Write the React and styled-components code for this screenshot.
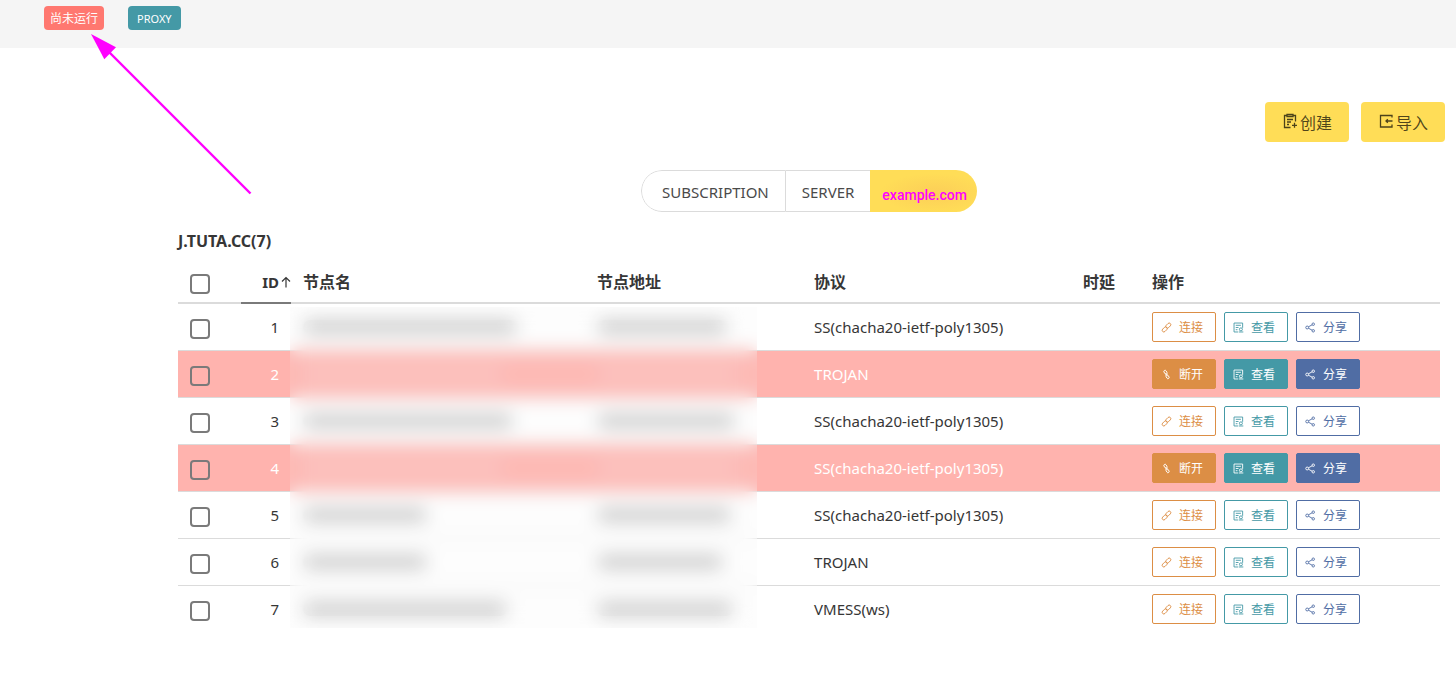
import React from "react";
import styled, { createGlobalStyle } from "styled-components";

const colors = {
  text: "#363636",
  line: "#dbdbdb",
  yellow: "#ffdd57",
  red: "#ff7870",
  selected: "#ffb3ae",
  orange: "#dc8e45",
  teal: "#4499a6",
  blue: "#506da4",
  mark: "#ff00ff",
};

const GlobalStyle = createGlobalStyle`
  * { box-sizing: border-box; }
  body {
    margin: 0;
    background: #fff;
    color: ${colors.text};
    font-family: "Noto Sans", "Noto Sans CJK SC", sans-serif;
    font-size: 15px;
    line-height: 24px;
  }
  button, input { font: inherit; margin: 0; }
`;

const Page = styled.div`
  position: relative;
`;

const TopBar = styled.header`
  display: flex;
  align-items: flex-start;
  gap: 24px;
  height: 48px;
  padding: 6px 44px;
  background: #f5f5f5;
`;

const StatusTag = styled.button`
  height: 24px;
  padding: 2px ${(p) => p.$pad}px 0;
  border: 0;
  border-radius: 4px;
  background: ${(p) => p.$color};
  color: #fff;
  font-size: ${(p) => p.$size}px;
  line-height: 22px;
  cursor: pointer;
`;

const Toolbar = styled.div`
  display: flex;
  justify-content: flex-end;
  gap: 12px;
  padding: 54px 11px 0;
`;

const ToolButton = styled.button`
  display: flex;
  align-items: center;
  justify-content: center;
  gap: 2px;
  width: 84px;
  height: 40px;
  padding: 2px 0 0;
  border: 0;
  border-radius: 4px;
  background: ${colors.yellow};
  color: rgba(0, 0, 0, 0.7);
  font-size: 16px;
  cursor: pointer;
  svg { margin-bottom: 4px; }
`;

const Main = styled.main`
  padding: 28px 16px 44px 178px;
`;

const Tabs = styled.nav`
  display: flex;
  width: fit-content;
  height: 42px;
  margin: 0 auto;
  border-radius: 21px;
  overflow: hidden;
`;

const Tab = styled.a`
  display: flex;
  align-items: center;
  padding: 2px 16px 0 ${(p) => (p.$first ? 20 : 16)}px;
  border: 1px solid ${colors.line};
  border-right-width: ${(p) => (p.$first ? 1 : 0)}px;
  border-left-width: ${(p) => (p.$first ? 1 : 0)}px;
  border-radius: ${(p) => (p.$first ? "21px 0 0 21px" : "0")};
  color: #4a4a4a;
  text-decoration: none;
`;

const ActiveTab = styled.a`
  display: flex;
  align-items: center;
  padding: 8px 10px 0 12px;
  background: radial-gradient(ellipse at 60% 55%, #fcce58 0, ${colors.yellow} 60%);
  color: ${colors.mark};
  font-family: Roboto, sans-serif;
  font-size: 14px;
  font-weight: 500;
  text-decoration: none;
`;

const Title = styled.h1`
  margin: 17px 0 9px;
  font-size: 16px;
  line-height: 24px;
  font-weight: 700;
`;

const TableWrap = styled.div`
  position: relative;
`;

const Table = styled.table`
  width: 100%;
  border-collapse: separate;
  border-spacing: 0;
  table-layout: fixed;
`;

const HeadCell = styled.th`
  position: relative;
  height: 42px;
  padding: 0 12px;
  border-bottom: 2px solid ${(p) => (p.$sorted ? "#7a7a7a" : colors.line)};
  text-align: ${(p) => (p.$sorted ? "right" : "left")};
  font-size: ${(p) => (p.$sorted ? 15 : 16)}px;
  font-weight: 700;
  width: ${(p) => p.$width || "auto"};
`;

const SortArrow = styled.svg`
  position: absolute;
  right: 0;
  top: 14px;
`;

const Row = styled.tr`
  background: ${(p) => (p.$on ? colors.selected : "#fff")};
  color: ${(p) => (p.$on ? "#fff" : colors.text)};
  &:last-child td { border-bottom-color: transparent; }
`;

const Cell = styled.td`
  height: 47px;
  padding: 0 12px;
  border-bottom: 1px solid ${colors.line};
  text-align: ${(p) => (p.$right ? "right" : "left")};
  white-space: nowrap;
`;

const Check = styled.input`
  appearance: none;
  display: block;
  width: 20px;
  height: 20px;
  margin-top: 3px;
  border: 2px solid #7a7a7a;
  border-radius: 4px;
  &:checked { background: #7a7a7a; }
`;

const Redacted = styled.span`
  display: block;
  width: ${(p) => p.$width}px;
  max-width: 100%;
  height: 14px;
  border-radius: 7px;
  background: ${(p) => (p.$on ? "#fdbfbb" : "#c8c8c8")};
`;

const Frost = styled.div`
  position: absolute;
  left: 112px;
  top: 45px;
  bottom: 5px;
  width: 37%;
  background: rgba(240, 240, 240, 0.12);
  backdrop-filter: blur(9px);
`;

const Actions = styled.div`
  display: flex;
  gap: 8px;
`;

const RowButton = styled.button`
  display: flex;
  align-items: center;
  justify-content: space-between;
  width: 64px;
  height: 30px;
  padding: 1px 12px 0 8px;
  border: 1px solid ${(p) => p.$color};
  border-radius: 2px;
  background: ${(p) => (p.$filled ? p.$color : "#fff")};
  color: ${(p) => (p.$filled ? "#fff" : p.$color)};
  font-size: 12px;
  line-height: 18px;
  cursor: pointer;
`;

const Pointer = styled.svg`
  position: absolute;
  left: 88px;
  top: 30px;
  pointer-events: none;
`;

const Icon = ({ size = 11, children }) => (
  <svg width={size} height={size} viewBox="0 0 16 16" fill="none" stroke="currentColor" strokeWidth="1.3" aria-hidden="true">
    {children}
  </svg>
);

const LinkIcon = () => (
  <Icon>
    <rect x="6.4" y="2.8" width="8.4" height="4.8" rx="2.4" transform="rotate(-45 10.6 5.2)" />
    <rect x="1.2" y="8.4" width="8.4" height="4.8" rx="2.4" transform="rotate(-45 5.4 10.8)" />
  </Icon>
);

const UnlinkIcon = () => (
  <Icon>
    <rect x="3.5" y="3" width="6" height="3.4" rx="1.7" transform="rotate(60 6.5 4.7)" />
    <rect x="6.500" y="9.600" width="6" height="3.4" rx="1.7" transform="rotate(60 9.500 11.300)" />
    <path d="M6.500 6l3 4.500" />
  </Icon>
);

const ViewIcon = () => (
  <Icon>
    <path d="M7.5 14.5H1.5v-13H14v7M4 4.8h7.5M4 8h4M4 11.2h2.5" />
    <circle cx="11.5" cy="10.7" r="2.2" />
    <path d="M8.5 14.5h6.5" />
  </Icon>
);

const ShareIcon = () => (
  <Icon>
    <circle cx="3.2" cy="8" r="2.1" />
    <circle cx="12" cy="3.2" r="1.8" />
    <circle cx="12" cy="12.8" r="1.8" />
    <path d="M5 7l5.5-3M5 9l5.5 3" />
  </Icon>
);

const CreateIcon = () => (
  <Icon size={16}>
    <path d="M4.5 2.5h-2v12h6M11.5 2.5h2v6M5 1.5h6v2H5zM5 6.5h6M5 9h4M5 11.5h2M12.5 9.8v5M10 12.3h5" />
  </Icon>
);

const ImportIcon = () => (
  <Icon size={16}>
    <path d="M14 4.5v-2H2.5V14H14v-2.5M14.500 8H8M9.800 6.300L8 8l1.800 1.700" />
  </Icon>
);

const nodes = [
  { id: 1, protocol: "SS(chacha20-ietf-poly1305)", name: 214, address: 130 },
  { id: 2, protocol: "TROJAN", name: 200, address: 140, on: true },
  { id: 3, protocol: "SS(chacha20-ietf-poly1305)", name: 210, address: 138 },
  { id: 4, protocol: "SS(chacha20-ietf-poly1305)", name: 200, address: 140, on: true },
  { id: 5, protocol: "SS(chacha20-ietf-poly1305)", name: 124, address: 134 },
  { id: 6, protocol: "TROJAN", name: 124, address: 126 },
  { id: 7, protocol: "VMESS(ws)", name: 204, address: 136 },
];

const NodeRow = ({ node }) => (
  <Row $on={node.on}>
    <Cell><Check type="checkbox" aria-label={`选择 ${node.id}`} /></Cell>
    <Cell $right>{node.id}</Cell>
    <Cell><Redacted $width={node.name} $on={node.on} /></Cell>
    <Cell><Redacted $width={node.address} $on={node.on} /></Cell>
    <Cell>{node.protocol}</Cell>
    <Cell />
    <Cell>
      <Actions>
        <RowButton $color={colors.orange} $filled={node.on}>
          {node.on ? <UnlinkIcon /> : <LinkIcon />}
          {node.on ? "断开" : "连接"}
        </RowButton>
        <RowButton $color={colors.teal} $filled={node.on}><ViewIcon />查看</RowButton>
        <RowButton $color={colors.blue} $filled={node.on}><ShareIcon />分享</RowButton>
      </Actions>
    </Cell>
  </Row>
);

export default function App() {
  return (
    <Page>
      <GlobalStyle />
      <TopBar>
        <StatusTag $color={colors.red} $pad={6} $size={12}>尚未运行</StatusTag>
        <StatusTag $color={colors.teal} $pad={9} $size={11}>PROXY</StatusTag>
      </TopBar>
      <Toolbar>
        <ToolButton><CreateIcon />创建</ToolButton>
        <ToolButton><ImportIcon />导入</ToolButton>
      </Toolbar>
      <Main>
        <Tabs>
          <Tab href="#subscription" $first>SUBSCRIPTION</Tab>
          <Tab href="#server">SERVER</Tab>
          <ActiveTab href="#example">example.com</ActiveTab>
        </Tabs>
        <Title>J.TUTA.CC(7)</Title>
        <TableWrap>
          <Table>
            <thead>
              <tr>
                <HeadCell $width="63px"><Check type="checkbox" aria-label="全选" /></HeadCell>
                <HeadCell $width="50px" $sorted>
                  ID
                  <SortArrow width="10" height="12" viewBox="0 0 10 12" fill="none" stroke={colors.text} strokeWidth="1.2" aria-hidden="true">
                    <path d="M5 11.5V1.5M1 5.5l4-4 4 4" />
                  </SortArrow>
                </HeadCell>
                <HeadCell $width="23.3%">节点名</HeadCell>
                <HeadCell $width="17.2%">节点地址</HeadCell>
                <HeadCell $width="21.3%">协议</HeadCell>
                <HeadCell $width="69px">时延</HeadCell>
                <HeadCell>操作</HeadCell>
              </tr>
            </thead>
            <tbody>
              {nodes.map((node) => <NodeRow key={node.id} node={node} />)}
            </tbody>
          </Table>
          <Frost />
        </TableWrap>
      </Main>
      <Pointer width="166" height="168" viewBox="88 30 166 168" aria-hidden="true">
        <path d="M250.5 193.5L108 51" stroke={colors.mark} strokeWidth="2.4" />
        <path d="M91 34L116 47.2L104.3 59.2Z" fill={colors.mark} />
      </Pointer>
    </Page>
  );
}
